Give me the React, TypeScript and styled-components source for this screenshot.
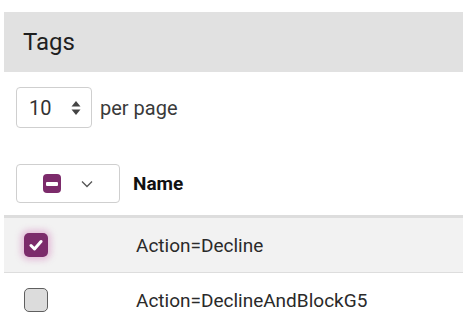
import styled, { createGlobalStyle } from 'styled-components';

// Styles globaux de la page
const GlobalStyle = createGlobalStyle`
  body {
    margin: 0;
    background: #ffffff;
    font-family: Roboto, "Liberation Sans", Arial, sans-serif;
    color: #212121;
  }
`;

const Page = styled.div`
  padding: 12px 0 0 4px;
`;

const Header = styled.div`
  height: 60px;
  background-color: #e1e1e1;
  display: flex;
  align-items: center;
  padding-left: 19px;
  font-size: 24px;
  color: #1f1f1f;
`;

const Toolbar = styled.div`
  display: flex;
  align-items: center;
  gap: 8px;
  padding: 15px 0 0 12px;
`;

const PageSelect = styled.div`
  box-sizing: border-box;
  width: 76px;
  height: 41px;
  border: 1px solid #cfcfcf;
  border-radius: 4px;
  display: flex;
  align-items: center;
  justify-content: space-between;
  padding: 0 10px 0 12px;
  font-size: 20px;
  color: #333;
`;

const ToolbarLabel = styled.span`
  font-size: 20px;
  color: #3a3a3a;
`;

const HeadRow = styled.div`
  display: flex;
  align-items: center;
  margin-top: 36px;
  padding: 0 0 12px 12px;
  border-bottom: 3px solid #dddddd;
`;

const BulkButton = styled.div`
  box-sizing: border-box;
  width: 104px;
  height: 39px;
  border: 1px solid #cfcfcf;
  border-radius: 4px;
  display: flex;
  align-items: center;
  padding-left: 26px;
  gap: 20px;
`;

const HeadCell = styled.div`
  padding-left: 13px;
  font-size: 19px;
  font-weight: 700;
  color: #111;
`;

const Row = styled.div<{ $selected?: boolean }>`
  display: flex;
  align-items: center;
  height: 54px;
  background: ${(p) => (p.$selected ? '#f2f2f2' : '#ffffff')};
  border-bottom: 1px solid #dddddd;
  &:last-child {
    border-bottom: none;
  }
`;

const CheckCell = styled.div`
  width: 132px;
  padding-left: 20px;
  box-sizing: border-box;
  display: flex;
  align-items: center;
`;

const Box = styled.div<{ $checked?: boolean }>`
  box-sizing: border-box;
  width: 24px;
  height: 24px;
  border-radius: 5px;
  display: flex;
  align-items: center;
  justify-content: center;
  background: ${(p) => (p.$checked ? '#7c2b6b' : '#dcdcdc')};
  border: ${(p) => (p.$checked ? 'none' : '1.5px solid #5f5f5f')};
  box-shadow: ${(p) => (p.$checked ? '0 0 6px 3px rgba(200, 90, 170, 0.35)' : 'none')};
`;

const MiniBox = styled.div`
  width: 18px;
  height: 19px;
  border-radius: 4px;
  background: #7c2b6b;
  display: flex;
  align-items: center;
  justify-content: center;
`;

const Dash = styled.div`
  width: 12px;
  height: 4px;
  background: #ffffff;
  border-radius: 1px;
`;

const NameCell = styled.div`
  font-size: 19px;
  color: #2a2a2a;
`;

const rows = [
  { name: 'Action=Decline', checked: true },
  { name: 'Action=DeclineAndBlockG5', checked: false },
];

const App = () => (
  <>
    <GlobalStyle />
    <Page>
      <Header>Tags</Header>
      <Toolbar>
        <PageSelect>
          10
          <svg width="10" height="16" viewBox="0 0 10 16">
            <path d="M5 1 L9.5 6.5 H0.5 Z" fill="#444" />
            <path d="M5 15 L9.5 9.5 H0.5 Z" fill="#444" />
          </svg>
        </PageSelect>
        <ToolbarLabel>per page</ToolbarLabel>
      </Toolbar>
      <HeadRow>
        <BulkButton>
          <MiniBox>
            <Dash />
          </MiniBox>
          <svg width="12" height="8" viewBox="0 0 12 8">
            <path d="M1 1.5 L6 6.5 L11 1.5" stroke="#555" strokeWidth="1.3" fill="none" />
          </svg>
        </BulkButton>
        <HeadCell>Name</HeadCell>
      </HeadRow>
      {rows.map((r) => (
        <Row key={r.name} $selected={r.checked}>
          <CheckCell>
            <Box $checked={r.checked}>
              {r.checked && (
                <svg width="14" height="12" viewBox="0 0 14 12">
                  <path d="M2 6.5 L5.5 10 L12 2.5" stroke="#fff" strokeWidth="3" fill="none" strokeLinecap="round" strokeLinejoin="round" />
                </svg>
              )}
            </Box>
          </CheckCell>
          <NameCell>{r.name}</NameCell>
        </Row>
      ))}
    </Page>
  </>
);

export default App;
